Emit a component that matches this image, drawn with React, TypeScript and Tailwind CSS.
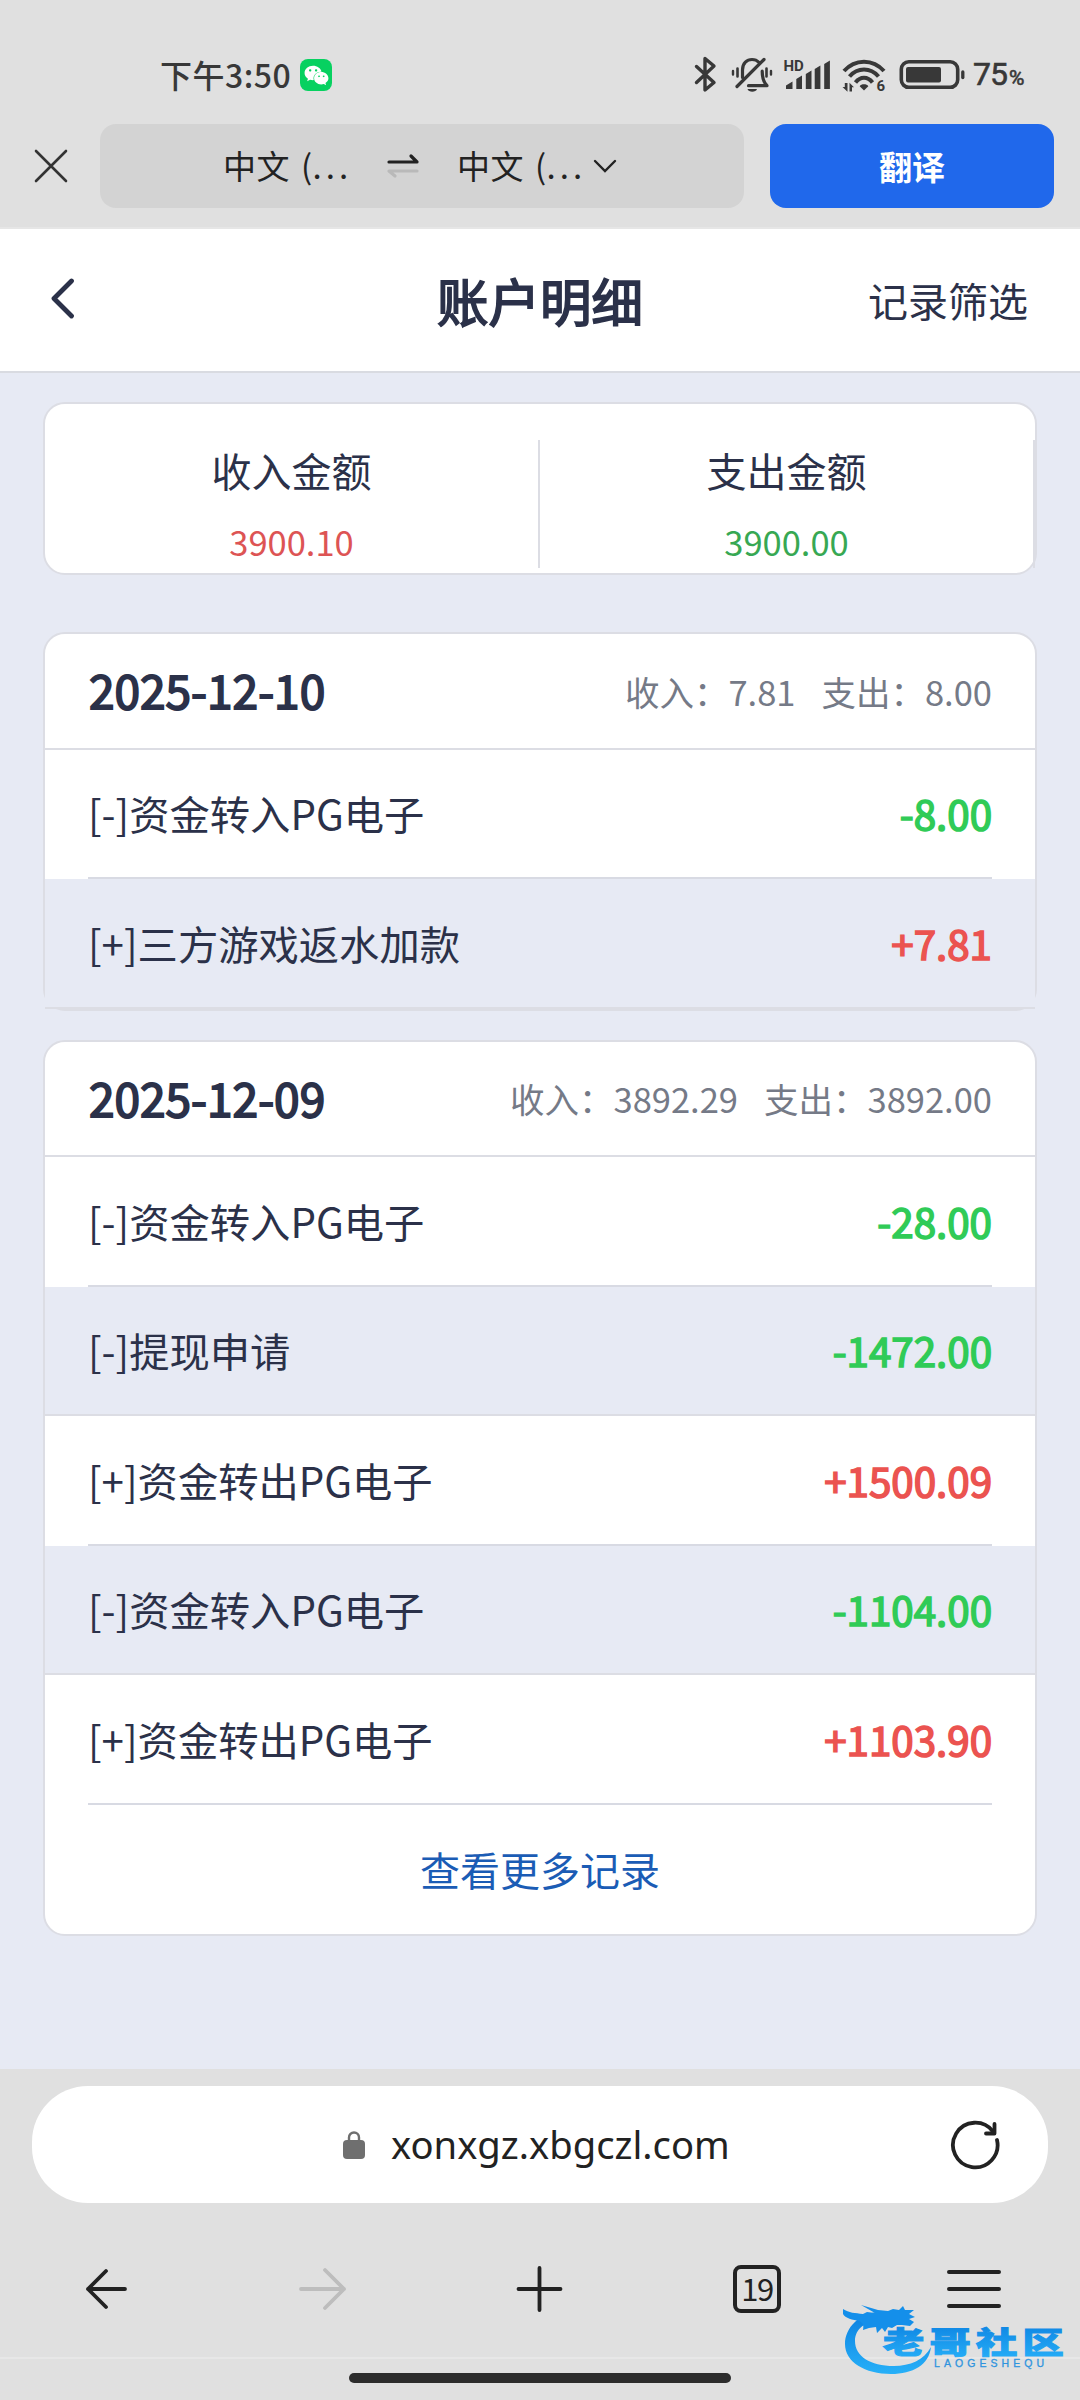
import { FaWeixin } from "react-icons/fa";
import type { JSX } from "react";

type Entry = { label: string; amount: string };
type Day = { date: string; income: string; expense: string; entries: Entry[]; more?: boolean };

const DAYS: Day[] = [
	{
		date: "2025-12-10",
		income: "7.81",
		expense: "8.00",
		entries: [
			{ label: "[-]资金转入PG电子", amount: "-8.00" },
			{ label: "[+]三方游戏返水加款", amount: "+7.81" },
		],
	},
	{
		date: "2025-12-09",
		income: "3892.29",
		expense: "3892.00",
		more: true,
		entries: [
			{ label: "[-]资金转入PG电子", amount: "-28.00" },
			{ label: "[-]提现申请", amount: "-1472.00" },
			{ label: "[+]资金转出PG电子", amount: "+1500.09" },
			{ label: "[-]资金转入PG电子", amount: "-1104.00" },
			{ label: "[+]资金转出PG电子", amount: "+1103.90" },
		],
	},
];

function StatusIcons(): JSX.Element {
	return (
		<svg className="shrink-0" width="276" height="40" viewBox="0 0 276 40" fill="none" stroke="#383838" strokeLinecap="round" strokeLinejoin="round">
			{/* bluetooth */}
			<path d="M5.500 11.500 23 27.500 14 35V3.500L23 11 5.500 27.500" strokeWidth="3.400" />
			{/* muted bell */}
			<g strokeWidth="3.200">
				<path d="M51.500 22.500V15c0-7 4.500-10.500 9.500-10.500 3 0 5.200 1 6.800 2.800M57.500 30.700H76c-3-3-4.800-6-4.800-14.500" />
				<path d="M73 4.500 46 31.500" />
				<path d="M46.500 13.500v8M75.500 13.500v8" strokeWidth="2.600" />
				<path d="M42 16v3.500M80 16v3.500" strokeWidth="2.400" />
			</g>
			<path d="M56.500 34h9.500c-1 3.600-8.500 3.600-9.500 0z" fill="#383838" stroke="none" />
			{/* signal */}
			<g fill="#383838" stroke="none">
				<path d="M95 34v-3.500l6.500-4V34zM105.300 34V24l5.700-3.500V34zM114.800 34V19l5.700-3.500V34zM123.700 34V14l5.700-3.500V34zM133.200 34V9l5.700-3.500V34z" />
				<text x="92.500" y="15.800" fontSize="15" fontWeight="700" fontFamily="Roboto, sans-serif">HD</text>
			</g>
			{/* wifi 6 */}
			<g strokeWidth="4" strokeLinecap="butt">
				<path d="M153 16c11-12.500 29-12.500 40 0" />
				<path d="M158.500 21.500c8-9.300 21-9.300 29 0" />
				<path d="M164.500 27.500c4.800-6.300 12.200-6.300 17 0" />
			</g>
			<g fill="#383838" stroke="none">
				<path d="m173 35.500-4.300-4.300c1.500-2.600 7.100-2.600 8.600 0z" />
				<path d="M156.500 28v8.700l-5-4.700h2.300v-4zM158.500 36.500v-8.800l4.500 4.600h-2v4.200z" />
				<text x="185.500" y="36" fontSize="15" fontWeight="700" fontFamily="Roboto, sans-serif">6</text>
			</g>
			{/* battery */}
			<rect x="210.300" y="6.800" width="56.400" height="25.500" rx="7.500" strokeWidth="3.600" />
			<rect x="215" y="12" width="35" height="15.500" rx="2" fill="#383838" stroke="none" />
			<path d="M271.800 17v5.500" strokeWidth="3.300" />
		</svg>
	);
}

function StatusBar(): JSX.Element {
	return (
		<div className="flex h-[124px] items-start justify-between pl-[160px] pt-[55px] text-[#383838]">
			<div className="flex h-10 items-center">
				<span className="w-[140px] whitespace-nowrap pb-0.5 text-[32px] leading-[38px] font-medium tracking-[0.500px]">下午3:50</span>
				<span className="flex size-8 items-center justify-center rounded-lg bg-[#07d160] text-white">
					<FaWeixin size={25} />
				</span>
			</div>
			<div className="flex h-10 w-[389px] items-center">
				<StatusIcons />
				<span className="ml-[6px] pt-px text-[32px] leading-10 tracking-[-1px] [-webkit-text-stroke:0.600px_#383838] [font-family:Roboto,sans-serif]">
					75<span className="ml-0.5 text-[21px]">%</span>
				</span>
			</div>
		</div>
	);
}

function Language(): JSX.Element {
	return (
		<span className="w-[126px] whitespace-nowrap">
			中文<span className="ml-[3px]"> (</span>
			<span className="tracking-[4px]">...</span>
		</span>
	);
}

function TranslateBar(): JSX.Element {
	return (
		<div className="flex h-[105px] items-start border-b-2 border-[#e6e6e6] pl-[34px]">
			<svg className="mt-[25px]" width="34" height="34" viewBox="0 0 34 34" stroke="#333" strokeWidth="2.600" strokeLinecap="round">
				<path d="M2 2l30 30M32 2 2 32" />
			</svg>
			<div className="ml-8 flex h-[84px] w-[644px] items-center rounded-2xl bg-[#d3d3d3] pl-[123px] text-[33px] tracking-[0.500px] text-[#222]">
				<Language />
				<svg className="ml-[38px]" width="32" height="30" viewBox="0 0 32 30" fill="none" strokeWidth="3.200" strokeLinecap="round" strokeLinejoin="round">
					<path d="M2 11h28l-6-6" stroke="#222" />
					<path d="M30 20H2l6 5" stroke="#b9b9b9" />
				</svg>
				<span className="ml-[38px] flex">
					<Language />
				</span>
				<svg className="ml-[9px]" width="26" height="16" viewBox="0 0 26 16" fill="none" stroke="#222" strokeWidth="2.400" strokeLinecap="round">
					<path d="m3 3 10 10L23 3" />
				</svg>
			</div>
			<button className="ml-[26px] h-[84px] w-[284px] rounded-2xl bg-[#2068eb] pt-0.5 text-[33px] font-bold text-white">翻译</button>
		</div>
	);
}

function PageHeader(): JSX.Element {
	return (
		<header className="grid h-[144px] grid-cols-3 items-center border-b-2 border-[#d9dbe1] bg-white text-[#2b3149]">
			<svg className="ml-[50px]" width="26" height="44" viewBox="0 0 26 44" fill="none" stroke="#2b3149" strokeWidth="4.800" strokeLinecap="round" strokeLinejoin="round">
				<path d="M21.500 3 4 20.500 21.500 38" />
			</svg>
			<h1 className="text-center text-[51.500px] [-webkit-text-stroke:1.800px_#2b3149]">账户明细</h1>
			<span className="pr-[52px] text-right text-[40px]">记录筛选</span>
		</header>
	);
}

function Summary(): JSX.Element {
	return (
		<section className="mt-[29px] flex h-[173px] rounded-[22px] border-2 border-[#dcdde4] bg-white pt-9 text-center text-[#2b3149]">
			<div className="h-[128px] w-1/2 border-r-2 border-[#dcdde4]">
				<p className="text-[40px] leading-[60px]">收入金额</p>
				<p className="mt-[11px] text-[34.500px] leading-[60px] text-[#dd5454]">3900.10</p>
			</div>
			<div className="h-[128px] w-1/2 border-r-2 border-[#dcdde4]">
				<p className="text-[40px] leading-[60px]">支出金额</p>
				<p className="mt-[11px] text-[34.500px] leading-[60px] text-[#37a853]">3900.00</p>
			</div>
		</section>
	);
}

function Row({ label, amount, shaded }: Entry & { shaded: boolean }): JSX.Element {
	return (
		<li className={shaded ? "bg-[#e7eaf4]" : "bg-white px-[43px]"}>
			<div
				className={
					shaded
						? "flex h-[129.500px] items-center justify-between border-b-2 border-[#dcdde4] px-[43px]"
						: "flex h-[129.500px] items-center justify-between border-b-2 border-[#d8dae3]"
				}
			>
				<span className="text-[40.300px]">{label}</span>
				<span
					className={
						amount.startsWith("+")
							? "text-[40.300px] text-[#eb5350] [-webkit-text-stroke:1.600px_#eb5350]"
							: "text-[40.300px] text-[#30cb57] [-webkit-text-stroke:1.600px_#30cb57]"
					}
				>
					{amount}
				</span>
			</div>
		</li>
	);
}

function DayCard({ date, income, expense, entries, more }: Day): JSX.Element {
	return (
		<section className="rounded-[22px] border-2 border-[#dcdde4] bg-white text-[#2b3149]">
			<div className="flex h-[115.500px] items-center justify-between border-b-2 border-[#dcdde4] px-[43px]">
				<h2 className="pb-0.5 pl-px text-[46px] [-webkit-text-stroke:1.800px_#2b3149]">{date}</h2>
				<p className="flex gap-[26px] pt-0.5 text-[34.500px] text-[#757a87]">
					<span>收入：{income}</span>
					<span>支出：{expense}</span>
				</p>
			</div>
			<ul>
				{entries.map((entry, i) => (
					<Row key={i} {...entry} shaded={i % 2 === 1} />
				))}
			</ul>
			{more && <button className="block h-[129px] w-full text-[40px] text-[#1b5cb5]">查看更多记录</button>}
		</section>
	);
}

function BrowserBar(): JSX.Element {
	return (
		<footer className="flex h-[331px] flex-col bg-[#e0e0e0] pt-[17px]">
			<div className="mx-8 flex h-[117px] items-center rounded-[56px] bg-white pl-[311px] pr-12">
				<svg width="22" height="28" viewBox="0 0 22 28" fill="none">
					<path d="M6 10V6.500a5 5 0 0 1 10 0V10" stroke="#6f6f6f" strokeWidth="2.400" />
					<rect y="9" width="22" height="19" rx="4" fill="#6f6f6f" />
				</svg>
				<span className="ml-[26px] text-[38.200px] text-[#222] [font-family:'Noto_Sans',sans-serif]">xonxgz.xbgczl.com</span>
				<svg className="ml-auto" width="50" height="50" viewBox="0 0 50 50" fill="none" stroke="#222" strokeWidth="3.800" strokeLinecap="round" strokeLinejoin="round">
					<path d="M47 20A22.300 22.300 0 1 1 43 11.500" />
					<path d="M44.500 4v9.500H36" />
				</svg>
			</div>
			<nav className="mt-[61px] flex h-[50px] items-center pl-[81px]">
				<svg width="50" height="50" viewBox="0 0 50 50" fill="none" stroke="#222" strokeWidth="3.800" strokeLinecap="round" strokeLinejoin="round">
					<path d="M44 25H7M25 7 7 25l18 18" />
				</svg>
				<svg className="ml-[167px]" width="50" height="50" viewBox="0 0 50 50" fill="none" stroke="#bdbdbd" strokeWidth="3.800" strokeLinecap="round" strokeLinejoin="round">
					<path d="M3 25h43M27 6l19 19-19 19" />
				</svg>
				<svg className="ml-[167px]" width="50" height="50" viewBox="0 0 50 50" fill="none" stroke="#222" strokeWidth="3.800" strokeLinecap="round">
					<path d="M3.500 25h42M24.500 4v42" />
				</svg>
				<span className="ml-[168px] flex size-[48px] items-center justify-center rounded-[8px] border-4 border-[#222] pb-[3px] text-[31px] leading-none tracking-[-1.500px] text-[#222]">19</span>
				<svg className="ml-[164px]" width="58" height="50" viewBox="0 0 58 50" stroke="#222" strokeWidth="4" strokeLinecap="round">
					<path d="M4 8h50M4 25h50M4 42h50" />
				</svg>
			</nav>
			<div className="mt-[43px] border-t-2 border-[#e7e7e7] pt-[14px]">
				<div className="mx-auto h-[10px] w-[382px] rounded-full bg-[#2c2c2c]" />
			</div>
		</footer>
	);
}

function Watermark(): JSX.Element {
	return (
		<svg className="absolute left-[841px] top-[2303px]" width="230" height="74" viewBox="0 0 230 74">
			<defs>
				<linearGradient id="wm" x1="0" y1="0" x2="0" y2="1">
					<stop offset="0" stopColor="#0b7fe0" />
					<stop offset="1" stopColor="#27b0f8" />
				</linearGradient>
			</defs>
			<path d="M38 9C18 10 4 25 4 41c0 18 20 30 46 30 22 0 38-9 40-27-7 13-21 19-37 19-24 0-39-10-39-25 0-12 10-20 28-22z" fill="url(#wm)" />
			<path d="M2 6c6 4 12 4 20 5l4-2 8 1-14-8 17 5 10 1 5-2 6 1 4-4 2 4 9 0-5 4 6 3-6 2 5 3-4 4-8-1-5 0-5 3-4-1-3 5-3-4-5 5-1-6-7 1-6 2c1-5 0-7-4-9-6-1-14-3-16-7z" fill="#148fea" />
			<text x="30" y="50" transform="scale(1.4 1)" fontSize="29.500" fontWeight="900" letterSpacing="3.700" fontFamily="'Noto Sans CJK SC', sans-serif" fill="url(#wm)" stroke="url(#wm)" strokeWidth="1">
				老哥社区
			</text>
			<text x="93" y="64" fontSize="10.500" textLength="110" fontFamily="'Liberation Sans', sans-serif" fill="#2f94de" stroke="#2f94de" strokeWidth="0.300">
				LAOGESHEQU
			</text>
		</svg>
	);
}

function App(): JSX.Element {
	return (
		<div className="relative flex h-[2400px] w-[1080px] flex-col overflow-hidden bg-[#e0e0e0] [font-family:'Noto_Sans_CJK_SC',sans-serif]">
			<StatusBar />
			<TranslateBar />
			<PageHeader />
			<main className="flex-1 bg-[#e7eaf4] px-[43px]">
				<Summary />
				<div className="mt-[57px] flex flex-col gap-[29px]">
					{DAYS.map((day) => (
						<DayCard key={day.date} {...day} />
					))}
				</div>
			</main>
			<BrowserBar />
			<Watermark />
		</div>
	);
}

export default App;
